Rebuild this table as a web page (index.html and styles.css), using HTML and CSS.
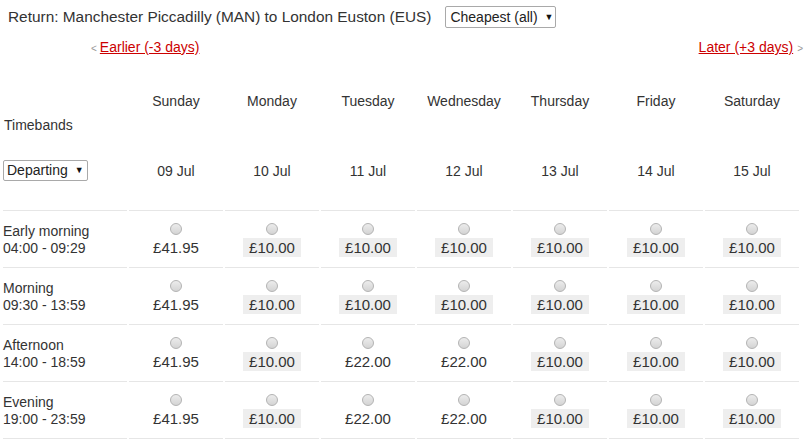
FILE: index.html
```html
<!DOCTYPE html>
<html>
<head>
<meta charset="utf-8">
<link rel="stylesheet" href="styles.css">
</head>
<body>
<div class="titlebar">
  <span class="title">Return: Manchester Piccadilly (MAN) to London Euston (EUS)</span>
  <span class="select sel-cheap">Cheapest (all) <span class="arrow">▼</span></span>
</div>
<div class="nav">
  <span class="earlier"><span class="chev">&lt;</span><a href="#">Earlier (-3 days)</a></span>
  <span class="later"><a href="#">Later (+3 days)</a><span class="chev">&gt;</span></span>
</div>
<div class="grid">
  <div class="h1 tb">Timebands</div>
  <div class="h1 day">Sunday</div>
  <div class="h1 day">Monday</div>
  <div class="h1 day">Tuesday</div>
  <div class="h1 day">Wednesday</div>
  <div class="h1 day">Thursday</div>
  <div class="h1 day">Friday</div>
  <div class="h1 day">Saturday</div>

  <div class="h2 first"><span class="select sel-dep">Departing <span class="arrow">▼</span></span></div>
  <div class="h2">09 Jul</div>
  <div class="h2">10 Jul</div>
  <div class="h2">11 Jul</div>
  <div class="h2">12 Jul</div>
  <div class="h2">13 Jul</div>
  <div class="h2">14 Jul</div>
  <div class="h2">15 Jul</div>

  <div class="band">Early morning<br>04:00 - 09:29</div>
  <div class="cell"><span class="radio"></span><span class="price">£41.95</span></div>
  <div class="cell"><span class="radio"></span><span class="price cheap">£10.00</span></div>
  <div class="cell"><span class="radio"></span><span class="price cheap">£10.00</span></div>
  <div class="cell"><span class="radio"></span><span class="price cheap">£10.00</span></div>
  <div class="cell"><span class="radio"></span><span class="price cheap">£10.00</span></div>
  <div class="cell"><span class="radio"></span><span class="price cheap">£10.00</span></div>
  <div class="cell"><span class="radio"></span><span class="price cheap">£10.00</span></div>

  <div class="band">Morning<br>09:30 - 13:59</div>
  <div class="cell"><span class="radio"></span><span class="price">£41.95</span></div>
  <div class="cell"><span class="radio"></span><span class="price cheap">£10.00</span></div>
  <div class="cell"><span class="radio"></span><span class="price cheap">£10.00</span></div>
  <div class="cell"><span class="radio"></span><span class="price cheap">£10.00</span></div>
  <div class="cell"><span class="radio"></span><span class="price cheap">£10.00</span></div>
  <div class="cell"><span class="radio"></span><span class="price cheap">£10.00</span></div>
  <div class="cell"><span class="radio"></span><span class="price cheap">£10.00</span></div>

  <div class="band">Afternoon<br>14:00 - 18:59</div>
  <div class="cell"><span class="radio"></span><span class="price">£41.95</span></div>
  <div class="cell"><span class="radio"></span><span class="price cheap">£10.00</span></div>
  <div class="cell"><span class="radio"></span><span class="price">£22.00</span></div>
  <div class="cell"><span class="radio"></span><span class="price">£22.00</span></div>
  <div class="cell"><span class="radio"></span><span class="price cheap">£10.00</span></div>
  <div class="cell"><span class="radio"></span><span class="price cheap">£10.00</span></div>
  <div class="cell"><span class="radio"></span><span class="price cheap">£10.00</span></div>

  <div class="band">Evening<br>19:00 - 23:59</div>
  <div class="cell"><span class="radio"></span><span class="price">£41.95</span></div>
  <div class="cell"><span class="radio"></span><span class="price cheap">£10.00</span></div>
  <div class="cell"><span class="radio"></span><span class="price">£22.00</span></div>
  <div class="cell"><span class="radio"></span><span class="price">£22.00</span></div>
  <div class="cell"><span class="radio"></span><span class="price cheap">£10.00</span></div>
  <div class="cell"><span class="radio"></span><span class="price cheap">£10.00</span></div>
  <div class="cell"><span class="radio"></span><span class="price cheap">£10.00</span></div>
</div>
</body>
</html>
```
FILE: styles.css
```css
html, body {
  margin: 0;
  padding: 0;
  background: #fff;
}
body {
  font-family: "Liberation Sans", Arial, sans-serif;
  font-size: 14px;
  color: #333;
}
.titlebar {
  height: 34px;
  display: flex;
  align-items: center;
  padding-left: 8px;
}
.title {
  font-size: 15.4px;
  line-height: 18px;
}
.select {
  display: inline-flex;
  align-items: center;
  box-sizing: border-box;
  border: 1px solid #a9a9a9;
  border-radius: 2px;
  background: #fff;
  color: #222;
  font-size: 14px;
  line-height: 18px;
}
.select .arrow {
  font-size: 9px;
  margin-left: 7px;
  color: #111;
}
.sel-cheap {
  margin-left: 14px;
  height: 22px;
  width: 111px;
  padding-left: 4px;
}
.sel-dep {
  height: 21px;
  width: 85px;
  padding-left: 3px;
}
.nav {
  height: 26px;
  display: flex;
  align-items: center;
  justify-content: space-between;
  padding-left: 91px;
  padding-right: 1px;
}
.nav a {
  color: #cc0000;
  text-decoration: underline;
  font-size: 14px;
}
.chev {
  color: #999;
  font-size: 10px;
}
.earlier .chev { margin-right: 3px; }
.later .chev { margin-left: 4px; }
.grid {
  display: grid;
  grid-template-columns: 124px repeat(7, 94px);
  column-gap: 2px;
  row-gap: 2px;
  margin-left: 3px;
  margin-top: 8px;
}
.h1 {
  height: 66px;
  box-sizing: border-box;
  line-height: 18px;
}
.day {
  text-align: center;
  padding-top: 24px;
}
.tb {
  display: flex;
  align-items: flex-end;
  padding-left: 1px;
}
.h2 {
  height: 75px;
  box-sizing: border-box;
  border-bottom: 1px solid #e6e6e6;
  display: flex;
  align-items: center;
  justify-content: center;
  padding-bottom: 5px;
}
.h2.first {
  justify-content: flex-start;
  padding-bottom: 6px;
}
.band {
  height: 55px;
  box-sizing: border-box;
  border-bottom: 1px solid #e6e6e6;
  display: flex;
  flex-direction: column;
  justify-content: center;
  line-height: 17px;
  padding-left: 0;
  padding-bottom: 1px;
}
.cell {
  height: 55px;
  box-sizing: border-box;
  border-bottom: 1px solid #e6e6e6;
  display: flex;
  flex-direction: column;
  align-items: center;
  justify-content: center;
  padding-bottom: 1px;
}
.radio {
  width: 12px;
  height: 12px;
  box-sizing: border-box;
  border-radius: 50%;
  border: 1px solid #b3b3b3;
  background: linear-gradient(#ececec, #d4d4d4);
  margin-bottom: 3px;
}
.price {
  font-size: 15px;
  line-height: 19px;
  padding: 0 6px;
}
.price.cheap {
  background: #eeeeee;
}
```
